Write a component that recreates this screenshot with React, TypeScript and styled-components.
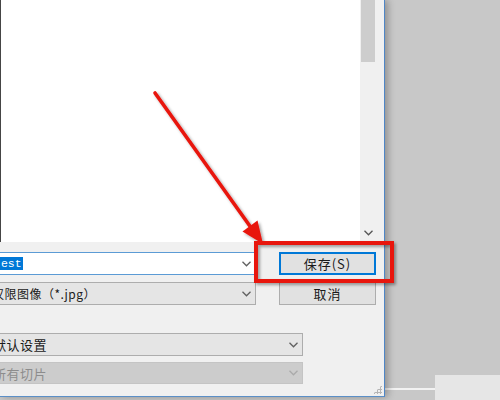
import React from "react";
import styled, { createGlobalStyle } from "styled-components";

const Global = createGlobalStyle`
  html, body { margin: 0; padding: 0; background: #c8c8c8; }
  body { font-family: "Noto Sans CJK SC", "Noto Sans", sans-serif; }
`;

const Screen = styled.div`
  position: relative;
  width: 500px;
  height: 400px;
  display: flex;
  overflow: hidden;
  background: #c8c8c8;
`;

const Dialog = styled.div`
  width: 384px;
  height: 396px;
  flex: none;
  display: flex;
  flex-direction: column;
  background: #f0f0f0;
  border-right: 1px solid #4f86c6;
  border-bottom: 1px solid #5b8fc7;
  box-shadow: 3px 0 7px rgba(0, 0, 0, 0.28);
  overflow: hidden;
  position: relative;
  z-index: 1;
`;

const Browser = styled.div`
  height: 242px;
  display: flex;
  flex: none;
`;

const FileList = styled.div`
  flex: 1;
  background: #ffffff;
  border-left: 1px solid #454545;
`;

const Scrollbar = styled.div`
  width: 16px;
  display: flex;
  flex-direction: column;
  background: #f0f0f0;
`;

const Thumb = styled.div`
  height: 62px;
  margin: 0 1px;
  background: #cdcdcd;
`;

const Track = styled.div`
  flex: 1;
`;

const ScrollArrow = styled.div`
  height: 18px;
  display: flex;
  align-items: center;
  justify-content: center;
`;

const Gutter = styled.div`
  width: 8px;
`;

const Form = styled.div`
  display: flex;
  flex-direction: column;
  padding-top: 10px;
  margin-left: -60px;
`;

const Row = styled.div<{ $top?: number }>`
  display: flex;
  align-items: center;
  gap: 23px;
  margin-top: ${(p) => p.$top ?? 0}px;
`;

const Field = styled.div<{
  $width: number;
  $height: number;
  $variant: "input" | "select" | "disabled";
}>`
  width: ${(p) => p.$width}px;
  height: ${(p) => p.$height}px;
  box-sizing: border-box;
  display: flex;
  align-items: center;
  padding: 0 4px 0 0;
  background: ${(p) =>
    p.$variant === "input" ? "#ffffff" : p.$variant === "disabled" ? "#cccccc" : "#e5e5e5"};
  border: 1px solid
    ${(p) =>
      p.$variant === "input" ? "#5b9bd5" : p.$variant === "disabled" ? "#c4c4c4" : "#adadad"};
  color: ${(p) => (p.$variant === "disabled" ? "#8c8c8c" : "#1a1a1a")};
`;

const FieldText = styled.span<{ $size: number; $indent: number }>`
  flex: 1;
  font-size: ${(p) => p.$size}px;
  white-space: nowrap;
  padding-left: ${(p) => p.$indent}px;
  letter-spacing: 0.5px;
`;

const MonoText = styled.span`
  flex: 1;
  padding-left: 52px;
  font-family: "Liberation Mono", "DejaVu Sans Mono", monospace;
  font-size: 11.5px;
  white-space: nowrap;
`;

const Selected = styled.span`
  background: #0078d7;
  color: #ffffff;
  padding: 0 1px;
`;

const Button = styled.div<{ $primary?: boolean }>`
  width: 97px;
  height: 23px;
  box-sizing: border-box;
  display: flex;
  align-items: center;
  justify-content: center;
  background: #e1e1e1;
  border: ${(p) => (p.$primary ? "2px solid #0078d7" : "1px solid #adadad")};
  font-size: 13px;
  color: #1a1a1a;
  letter-spacing: 1px;
`;

const Grip = styled.div`
  position: absolute;
  right: 2px;
  bottom: 2px;
  width: 9px;
  height: 9px;
  background-image: radial-gradient(circle, #b5b5b5 1px, transparent 1.3px);
  background-size: 3px 3px;
  clip-path: polygon(100% 0, 100% 100%, 0 100%);
`;

const Backdrop = styled.div`
  flex: 1;
  display: flex;
  flex-direction: column;
`;

const BackdropSpace = styled.div`
  flex: 1;
`;

const BehindWindow = styled.div`
  height: 25px;
  display: flex;
`;

const BehindEdge = styled.div`
  width: 50px;
  padding-top: 13px;
`;

const BehindLine = styled.div`
  height: 2px;
  background: #f2f2f2;
`;

const BehindPanel = styled.div`
  flex: 1;
  background: #e6e6e6;
`;

const Annotation = styled.svg`
  position: absolute;
  left: 0;
  top: 0;
  width: 500px;
  height: 400px;
  z-index: 2;
  pointer-events: none;
`;

const Chevron: React.FC<{ color?: string }> = ({ color = "#606060" }) => (
  <svg width="9" height="6" viewBox="0 0 9 6">
    <polyline points="0.5,0.8 4.5,4.8 8.5,0.8" fill="none" stroke={color} strokeWidth="1.3" />
  </svg>
);

export default function App() {
  return (
    <>
      <Global />
      <Screen>
        <Dialog>
          <Browser>
            <FileList />
            <Scrollbar>
              <Thumb />
              <Track />
              <ScrollArrow>
                <Chevron color="#555" />
              </ScrollArrow>
            </Scrollbar>
            <Gutter />
          </Browser>
          <Form>
            <Row>
              <Field $width={316} $height={23} $variant="input">
                <MonoText>
                  t<Selected>est</Selected>
                </MonoText>
                <Chevron />
              </Field>
              <Button $primary>保存(S)</Button>
            </Row>
            <Row $top={7}>
              <Field $width={316} $height={23} $variant="select">
                <FieldText $size={12} $indent={51}>仅限图像（*.jpg）</FieldText>
                <Chevron />
              </Field>
              <Button>取消</Button>
            </Row>
            <Row $top={28}>
              <Field $width={363} $height={23} $variant="select">
                <FieldText $size={13} $indent={52}>默认设置</FieldText>
                <Chevron />
              </Field>
            </Row>
            <Row $top={6}>
              <Field $width={363} $height={22} $variant="disabled">
                <FieldText $size={13} $indent={52}>所有切片</FieldText>
                <Chevron color="#aaaaaa" />
              </Field>
            </Row>
          </Form>
          <Grip />
        </Dialog>
        <Backdrop>
          <BackdropSpace />
          <BehindWindow>
            <BehindEdge>
              <BehindLine />
            </BehindEdge>
            <BehindPanel />
          </BehindWindow>
        </Backdrop>
        <Annotation viewBox="0 0 500 400">
          <defs>
            <filter id="sh" x="-20%" y="-20%" width="140%" height="140%">
              <feDropShadow dx="2" dy="2" stdDeviation="1.6" floodColor="#000" floodOpacity="0.35" />
            </filter>
          </defs>
          <g filter="url(#sh)">
            <line x1="155" y1="93" x2="252" y2="229" stroke="#e8150f" strokeWidth="3.6" strokeLinecap="round" />
            <polygon points="263,244 257.5,220.5 242.5,231.5" fill="#e8150f" />
            <rect x="256" y="243" width="136" height="38" fill="none" stroke="#e8150f" strokeWidth="4" />
          </g>
        </Annotation>
      </Screen>
    </>
  );
}
